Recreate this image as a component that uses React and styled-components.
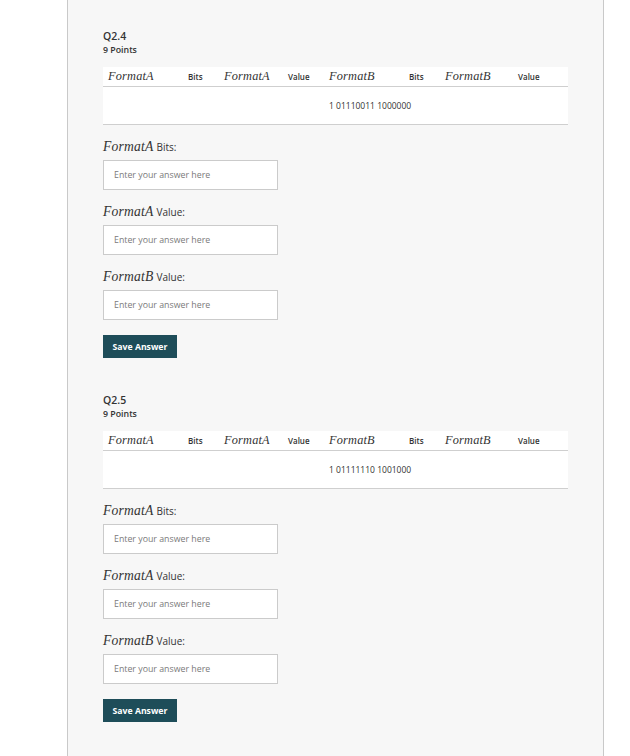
import React from "react";
import styled, { createGlobalStyle } from "styled-components";

const Global = createGlobalStyle`
  html, body { margin: 0; padding: 0; background: #ffffff; }
  body { font-family: "Open Sans", "Liberation Sans", sans-serif; color: #333; }
  * { box-sizing: border-box; }
`;

const Page = styled.div`
  width: 630px;
  min-height: 756px;
  display: flex;
`;

const Panel = styled.main`
  margin-left: 67px;
  width: 537px;
  min-height: 756px;
  background: #f7f7f7;
  border-left: 1px solid #c9c9c9;
  border-right: 1px solid #c9c9c9;
  padding: 29px 35px 0 35px;
  display: flex;
  flex-direction: column;
  gap: 35px;
`;

const Question = styled.section`
  display: flex;
  flex-direction: column;
`;

const Title = styled.div`
  font-size: 10.5px;
  font-weight: 600;
  line-height: 14px;
  color: #333;
`;

const Points = styled.div`
  font-size: 8.8px;
  font-weight: 600;
  line-height: 12px;
  color: #333;
  margin-top: 0.5px;
`;

const Table = styled.div`
  margin-top: 11.5px;
  width: 465px;
  background: #fff;
`;

const Row = styled.div`
  display: grid;
  grid-template-columns: 80px 36px 64px 41px 80px 36px 73px 55px;
  align-items: center;
  height: ${(p) => p.$h}px;
  border-bottom: 1px solid #cfcfcf;
  box-sizing: content-box;
`;

const Cell = styled.div`
  padding-left: 5px;
  white-space: nowrap;
  font-size: ${(p) => (p.$head ? "8px" : "8.5px")};
  font-weight: ${(p) => (p.$head ? 600 : 400)};
  color: #333;
`;

const Math = styled.span`
  font-family: "Liberation Serif", "DejaVu Serif", serif;
  font-style: italic;
  font-size: ${(p) => p.$size}px;
  font-weight: 400;
  letter-spacing: 0.2px;
  color: #333;
`;

const Field = styled.div`
  display: flex;
  flex-direction: column;
  margin-top: 14px;
`;

const Label = styled.label`
  display: flex;
  align-items: baseline;
  gap: 3px;
  height: 16px;
  line-height: 16px;
  font-size: 10px;
  color: #333;
`;

const Input = styled.input`
  margin-top: 5px;
  width: 175px;
  height: 30px;
  border: 1px solid #cbcbcb;
  background: #fff;
  padding: 0 10px;
  font-family: "Open Sans", "Liberation Sans", sans-serif;
  font-size: 8.8px;
  color: #333;
  outline: none;
  &::placeholder { color: #7a7a7a; }
`;

const Button = styled.button`
  margin-top: 15px;
  align-self: flex-start;
  width: 74px;
  height: 23px;
  border: none;
  background: #1e4d59;
  color: #fff;
  font-family: "Open Sans", "Liberation Sans", sans-serif;
  font-size: 8.7px;
  font-weight: 700;
  padding: 0;
  cursor: pointer;
`;

const questions = [
  { id: "Q2.4", value: "1 01110011 1000000" },
  { id: "Q2.5", value: "1 01111110 1001000" },
];

const header = [
  ["m", "FormatA"],
  ["t", "Bits"],
  ["m", "FormatA"],
  ["t", "Value"],
  ["m", "FormatB"],
  ["t", "Bits"],
  ["m", "FormatB"],
  ["t", "Value"],
];

const fields = [
  ["FormatA", "Bits:"],
  ["FormatA", "Value:"],
  ["FormatB", "Value:"],
];

function QuestionBlock({ q }) {
  return (
    <Question>
      <Title>{q.id}</Title>
      <Points>9 Points</Points>
      <Table>
        <Row $h={19}>
          {header.map(([k, t], i) => (
            <Cell $head key={i}>
              {k === "m" ? <Math $size={12.3}>{t}</Math> : t}
            </Cell>
          ))}
        </Row>
        <Row $h={37}>
          <Cell />
          <Cell />
          <Cell />
          <Cell />
          <Cell>{q.value}</Cell>
          <Cell />
          <Cell />
          <Cell />
        </Row>
      </Table>
      {fields.map(([m, t], i) => (
        <Field key={i}>
          <Label>
            <Math $size={13.6}>{m}</Math>
            <span>{t}</span>
          </Label>
          <Input placeholder="Enter your answer here" />
        </Field>
      ))}
      <Button>Save Answer</Button>
    </Question>
  );
}

export default function App() {
  return (
    <Page>
      <Global />
      <Panel>
        {questions.map((q) => (
          <QuestionBlock key={q.id} q={q} />
        ))}
      </Panel>
    </Page>
  );
}
